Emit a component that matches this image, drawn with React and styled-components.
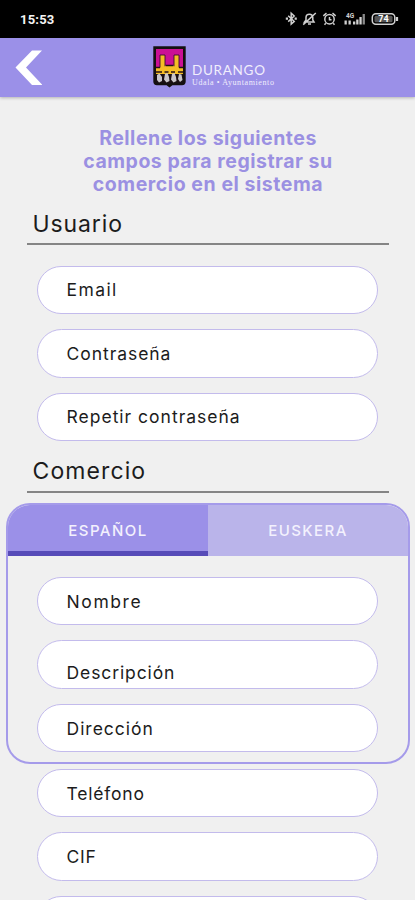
import React from 'react';
import styled, { createGlobalStyle } from 'styled-components';

const GlobalStyle = createGlobalStyle`
  * {
    box-sizing: border-box;
  }
  body {
    margin: 0;
    background-color: #f0f0f0;
    font-family: Inter, 'Open Sans', sans-serif;
    color: #1c1c1c;
    overflow: hidden;
  }
`;

const Screen = styled.div`
  width: 415px;
  height: 900px;
  overflow: hidden;
  background-color: #f0f0f0;
`;

const StatusBar = styled.div`
  display: flex;
  align-items: center;
  justify-content: space-between;
  height: 38px;
  padding: 0 16px 0 20px;
  background-color: #000;
`;

const Clock = styled.span`
  color: #f4f4f4;
  font-family: Roboto, sans-serif;
  font-size: 13px;
  font-weight: 700;
  letter-spacing: 0.2px;
`;

const Header = styled.header`
  display: flex;
  align-items: center;
  height: 59px;
  background-color: #9b90e8;
  box-shadow: 0 1px 3px rgba(0, 0, 0, 0.25);
`;

const BackButton = styled.button`
  display: flex;
  width: 27px;
  margin: 0 110px 0 15px;
  padding: 0;
  border: none;
  background: none;
`;

const Logo = styled.div`
  display: flex;
  align-items: flex-start;
  height: 43px;
`;

const LogoText = styled.div`
  display: flex;
  flex-direction: column;
  margin: 17px 0 0 5px;
  color: #f1eefc;
  font-family: Lato, sans-serif;
`;

const LogoName = styled.span`
  font-size: 13.5px;
  line-height: 15px;
  letter-spacing: 0.7px;
`;

const LogoSub = styled.span`
  font-family: 'Liberation Serif', serif;
  font-size: 8px;
  line-height: 9px;
  letter-spacing: 0.6px;
  white-space: nowrap;
`;

const Title = styled.h1`
  margin: 30px 0 0;
  color: #9b90e2;
  font-size: 19.5px;
  font-weight: 700;
  line-height: 23px;
  text-align: center;
`;

const Line = styled.span`
  display: block;
  padding-left: 1px;
  letter-spacing: ${(props) => props.$track || 0}px;
`;

const SectionTitle = styled.h2`
  width: 362px;
  height: ${(props) => props.$height}px;
  margin: ${(props) => props.$top}px 0 0 27px;
  padding-left: 5.5px;
  border-bottom: 2px solid #858585;
  font-size: 23px;
  font-weight: 400;
  line-height: 28px;
  letter-spacing: ${(props) => props.$track || 0}px;
`;

const Fields = styled.div`
  display: flex;
  flex-direction: column;
  gap: 15px;
  padding: ${(props) => props.$pad};
`;

const Field = styled.div`
  display: flex;
  align-items: center;
  flex-shrink: 0;
  width: 341px;
  height: 48.5px;
  padding: ${(props) => (props.$low ? '15px' : '0')} 0 0 28.5px;
  border: 1px solid #c3bbec;
  border-radius: 25px;
  background-color: #fff;
  font-size: 17.5px;
  letter-spacing: ${(props) => props.$track || 0}px;
`;

const Panel = styled.section`
  width: 404px;
  height: 261px;
  margin: 10px 0 0 6px;
  border: 2px solid #a59bea;
  border-radius: 24px;
  overflow: hidden;
`;

const Tabs = styled.div`
  display: grid;
  grid-template-columns: 1fr 1fr;
  height: 51px;
`;

const Tab = styled.button`
  padding: 6px 0 0;
  border: none;
  border-bottom: 5px solid ${(props) => (props.$active ? '#574bb8' : '#bab4ea')};
  background-color: ${(props) => (props.$active ? '#9b90e8' : '#bab4ea')};
  color: #f3f1fd;
  font-family: inherit;
  font-size: 15px;
  font-weight: 500;
  letter-spacing: ${(props) => props.$track || 0}px;
`;

const userFields = [
  { label: 'Email', track: 1.4 },
  { label: 'Contraseña', track: 0.95 },
  { label: 'Repetir contraseña', track: 1.0 },
];

const shopFields = [
  { label: 'Nombre', track: 1.6 },
  { label: 'Descripción', track: 0.9, low: true },
  { label: 'Dirección', track: 1.0 },
];

const moreFields = [
  { label: 'Teléfono', track: 0.8 },
  { label: 'CIF', track: 0.8 },
  { label: '', track: 0 },
];

const StatusIcons = () => (
  <svg width="114" height="16" viewBox="0 0 114 16" fill="none" stroke="#d0d0d0" strokeWidth="1.5">
    {/* bluetooth */}
    <path d="M3.200 4.800l6 5.600L6.200 13V2.200l3 2.800-6 5.600" />
    <path d="M0.800 7.700h2.200M9.600 7.700h2.200" strokeWidth="2.200" />
    {/* muted bell */}
    <path d="M19.500 11h9.500l-1.200-2V6.500c0-2-1.300-3.200-3.300-3.200S21 4.500 21 6.500V9zM23 12.900h3M18.200 13.600L30.800 2" />
    {/* alarm */}
    <circle cx="44.500" cy="8.200" r="4.700" />
    <path d="M44.500 6V8.800h2M38.300 4.800l3.200-2.600M50.700 4.800l-3.200-2.600M40.800 12.200l-1.300 1.500M48.200 12.200l1.300 1.500" />
    {/* signal */}
    <g fill="#d0d0d0" stroke="none">
      <rect x="68" y="10.500" width="2.300" height="3" />
      <rect x="71.200" y="8.500" width="2.300" height="5" />
      <rect x="74.400" y="6" width="2.300" height="7.500" />
      <rect x="77.600" y="3" width="2.300" height="10.500" fill="#8a8a8a" />
      <text x="61" y="7" fontFamily="Roboto, sans-serif" fontSize="6.500" fontWeight="700">4G</text>
      <path d="M59.500 9.500h2.300v4h-2.300zM63.500 9.500h2.300v4h-2.300z" />
    </g>
    {/* battery */}
    <rect x="87.300" y="2.700" width="22.500" height="10.600" rx="3.500" />
    <path d="M112 6v4" strokeWidth="2.200" />
    <rect x="89.500" y="4.700" width="18" height="6.600" rx="1.500" fill="#555" stroke="none" />
    <text x="98.500" y="11.200" textAnchor="middle" fontFamily="Roboto, sans-serif" fontSize="9" fontWeight="700" fill="#fff" stroke="none">74</text>
  </svg>
);

const Shield = () => (
  <svg width="35" height="42" viewBox="0 0 35 42">
    <path d="M2.500 1.500h30v34q0 2.500-2.500 2.500H20l-2.500 2-2.500-2H5q-2.500 0-2.500-2.500z" fill="#1a1014" stroke="#141010" strokeWidth="2.400" />
    <path d="M4 3h27v20H4z" fill="#cb1095" />
    {/* towers and wall */}
    <path d="M8 9h5v15H8zM22 9h5v15h-5z" fill="#f5bd25" stroke="#3a0f2c" strokeWidth="0.900" />
    <path d="M4 21.500h7l2.500-2h8l2.500 2h7V28H4z" fill="#f5bd25" />
    <path d="M4 21.500h4M13.500 19.500h8M27 21.500h4" stroke="#241018" strokeWidth="1.400" />
    <path d="M4 26h6M12.500 26h4M19 26h4M26 26h5" stroke="#241018" strokeWidth="1.600" />
    {/* figures at the base */}
    <path d="M5 29l2.500-1.500L10 31v4l-3 1.500L5 34zM13 28l2.500-1 1.500 4 .5 4-3 1.500-2.500-3zM20 28l2.500-1 1.500 4 .5 4-3 1.500-2.500-3zM27 28l2.500.5 1 5.500-2.500 2-2-3z" fill="#c9c6ca" />
  </svg>
);

const renderFields = (fields) =>
  fields.map((field) => (
    <Field key={field.label} $track={field.track} $low={field.low}>
      {field.label}
    </Field>
  ));

const App = () => {
  return (
    <Screen>
      <GlobalStyle />
      <StatusBar>
        <Clock>15:53</Clock>
        <StatusIcons />
      </StatusBar>
      <Header>
        <BackButton aria-label="Atrás">
          <svg width="27" height="36" viewBox="0 0 27 36">
            <path d="M17 .5h10L11 17.500 27.500 35H17L.5 17.500z" fill="#fff" />
          </svg>
        </BackButton>
        <Logo>
          <Shield />
          <LogoText>
            <LogoName>DURANGO</LogoName>
            <LogoSub>Udala • Ayuntamiento</LogoSub>
          </LogoText>
        </Logo>
      </Header>
      <Title>
        <Line $track={0.5}>Rellene los siguientes</Line>
        <Line $track={0.5}>campos para registrar su</Line>
        <Line $track={0.55}>comercio en el sistema</Line>
      </Title>
      <SectionTitle $top={14} $height={35} $track={0.9}>Usuario</SectionTitle>
      <Fields $pad="20.6px 0 0 37px">{renderFields(userFields)}</Fields>
      <SectionTitle $top={15.9} $height={36} $track={1.1}>Comercio</SectionTitle>
      <Panel>
        <Tabs>
          <Tab $active $track={1.5}>ESPAÑOL</Tab>
          <Tab $track={1.4}>EUSKERA</Tab>
        </Tabs>
        <Fields $pad="21px 0 0 29px">{renderFields(shopFields)}</Fields>
      </Panel>
      <Fields $pad="5px 0 0 37px">{renderFields(moreFields)}</Fields>
    </Screen>
  );
};

export default App;
